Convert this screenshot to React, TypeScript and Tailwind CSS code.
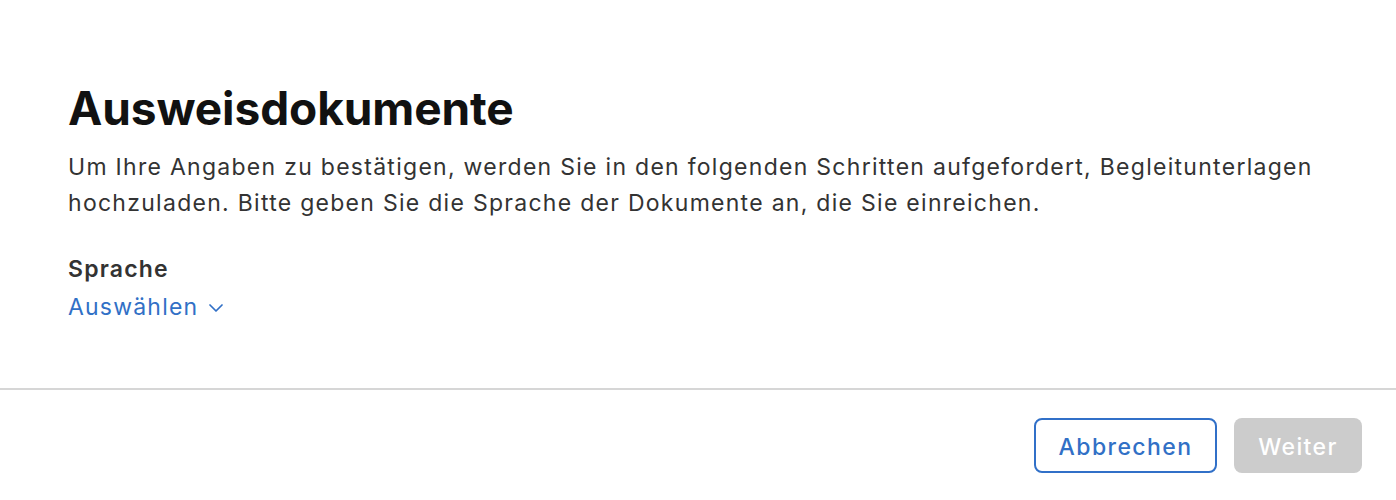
export default function App() {
  return (
    <div className="w-[1396px] h-[500px] bg-white flex flex-col font-['Inter','Noto_Sans',sans-serif]">
      <div className="h-[388px] px-[68px] pt-[82px]">
        <h1 className="text-[46px] leading-[52px] font-bold text-[#111] tracking-[-0.1px]">Ausweisdokumente</h1>
        <p className="mt-[15px] w-[1260px] text-[23px] leading-[36px] tracking-[1.28px] text-[#333]">
          Um Ihre Angaben zu bestätigen, werden Sie in den folgenden Schritten aufgefordert, Begleitunterlagen hochzuladen. Bitte geben Sie die Sprache der Dokumente an, die Sie einreichen.
        </p>
        <div className="mt-[34px] text-[23px] leading-[28px] font-semibold tracking-[1.2px] text-[#333]">Sprache</div>
        <button className="mt-[10px] flex items-center gap-[11px] text-[23px] leading-[28px] tracking-[1.2px] text-[#3170c6]">
          <span>Auswählen</span>
          <svg width="14" height="8" viewBox="0 0 14 8" fill="none" className="mt-[2px]">
            <path d="M1 1 L7 7 L13 1" stroke="#3170c6" strokeWidth="1.7" strokeLinecap="round" strokeLinejoin="round" />
          </svg>
        </button>
      </div>
      <div className="h-[2px] bg-[#d6d6d6]" />
      <div className="flex-1 flex justify-end items-start pt-[28px] pr-[34px] gap-[17px]">
        <button className="w-[183px] h-[55px] pt-[3px] rounded-[8px] border-2 border-[#3170c8] text-[#3170c6] text-[23px] font-medium tracking-[1.4px]">Abbrechen</button>
        <button className="w-[128px] h-[55px] pt-[3px] rounded-[8px] bg-[#cccccc] text-white text-[23px] font-medium tracking-[1.4px]">Weiter</button>
      </div>
    </div>
  );
}
